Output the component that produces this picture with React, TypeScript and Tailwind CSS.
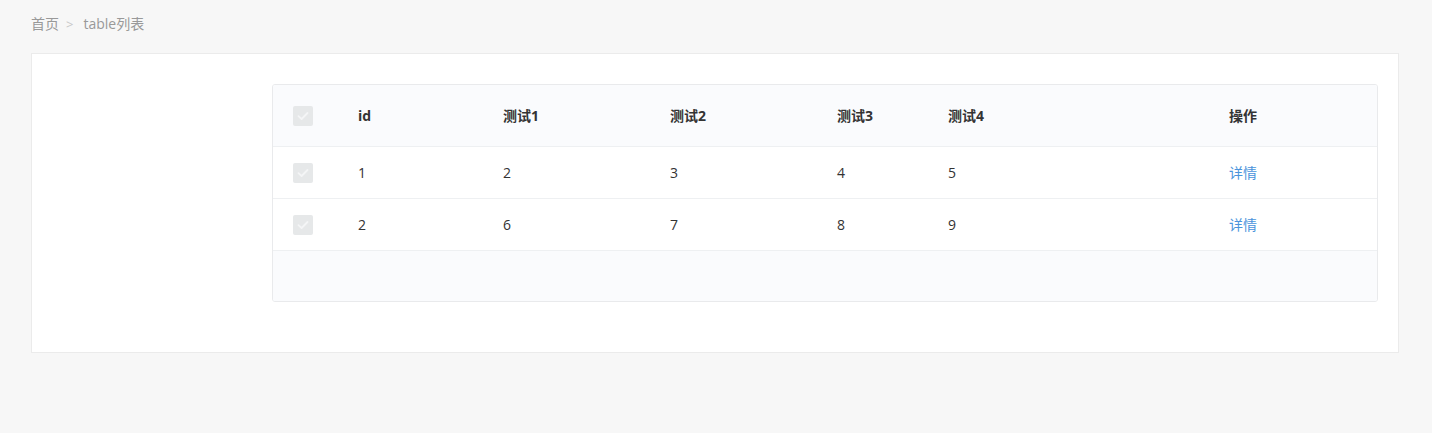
import React from "react";

const cols = "grid grid-cols-[68px_145px_167px_167px_111px_281px_1fr]";

function Check() {
  return (
    <div className="pl-[20px] flex items-center">
      <div className="w-[20px] h-[20px] rounded-[2px] bg-[#e6e8e9] flex items-center justify-center">
        <svg width="12" height="10" viewBox="0 0 12 10" fill="none">
          <path d="M1.5 5.2 L4.6 8 L10.5 2" stroke="#f4f5f6" strokeWidth="1.8" strokeLinecap="round" strokeLinejoin="round" />
        </svg>
      </div>
    </div>
  );
}

const rows = [
  ["1", "2", "3", "4", "5"],
  ["2", "6", "7", "8", "9"],
];

export default function App() {
  return (
    <div
      className="min-h-[433px] bg-[#f7f7f7] pl-[31px] pr-[33px] pt-[14px] text-[14px]"
      style={{ fontFamily: '"Open Sans", "Noto Sans CJK SC", sans-serif' }}
    >
      <div className="h-[20px] flex items-center text-[#999] leading-[20px]">
        <span>首页</span>
        <span className="text-[#c8c8c8] ml-[7px] mr-[10px] text-[13px]">&gt;</span>
        <span>table列表</span>
      </div>
      <div className="mt-[19px] bg-white border border-[#ebebeb] pt-[30px] pr-[20px] pb-[50px] pl-[240px]">
        <div className="border border-[#e9eaec] rounded-[3px] overflow-hidden text-[#333]">
          <div className={`${cols} h-[62px] items-center bg-[#fafbfd] border-b border-[#eef0f2] font-bold`}>
            <Check />
            <div className="pl-[17px]">id</div>
            <div className="pl-[17px]">测试1</div>
            <div className="pl-[17px]">测试2</div>
            <div className="pl-[17px]">测试3</div>
            <div className="pl-[17px]">测试4</div>
            <div className="pl-[17px]">操作</div>
          </div>
          {rows.map((r, i) => (
            <div key={i} className={`${cols} h-[52px] items-center bg-white border-b border-[#eef0f2]`}>
              <Check />
              {r.map((c, j) => (
                <div key={j} className="pl-[17px]">{c}</div>
              ))}
              <div className="pl-[17px] text-[#4a94dc]">详情</div>
            </div>
          ))}
          <div className="h-[50px] bg-[#fafbfd]" />
        </div>
      </div>
    </div>
  );
}
